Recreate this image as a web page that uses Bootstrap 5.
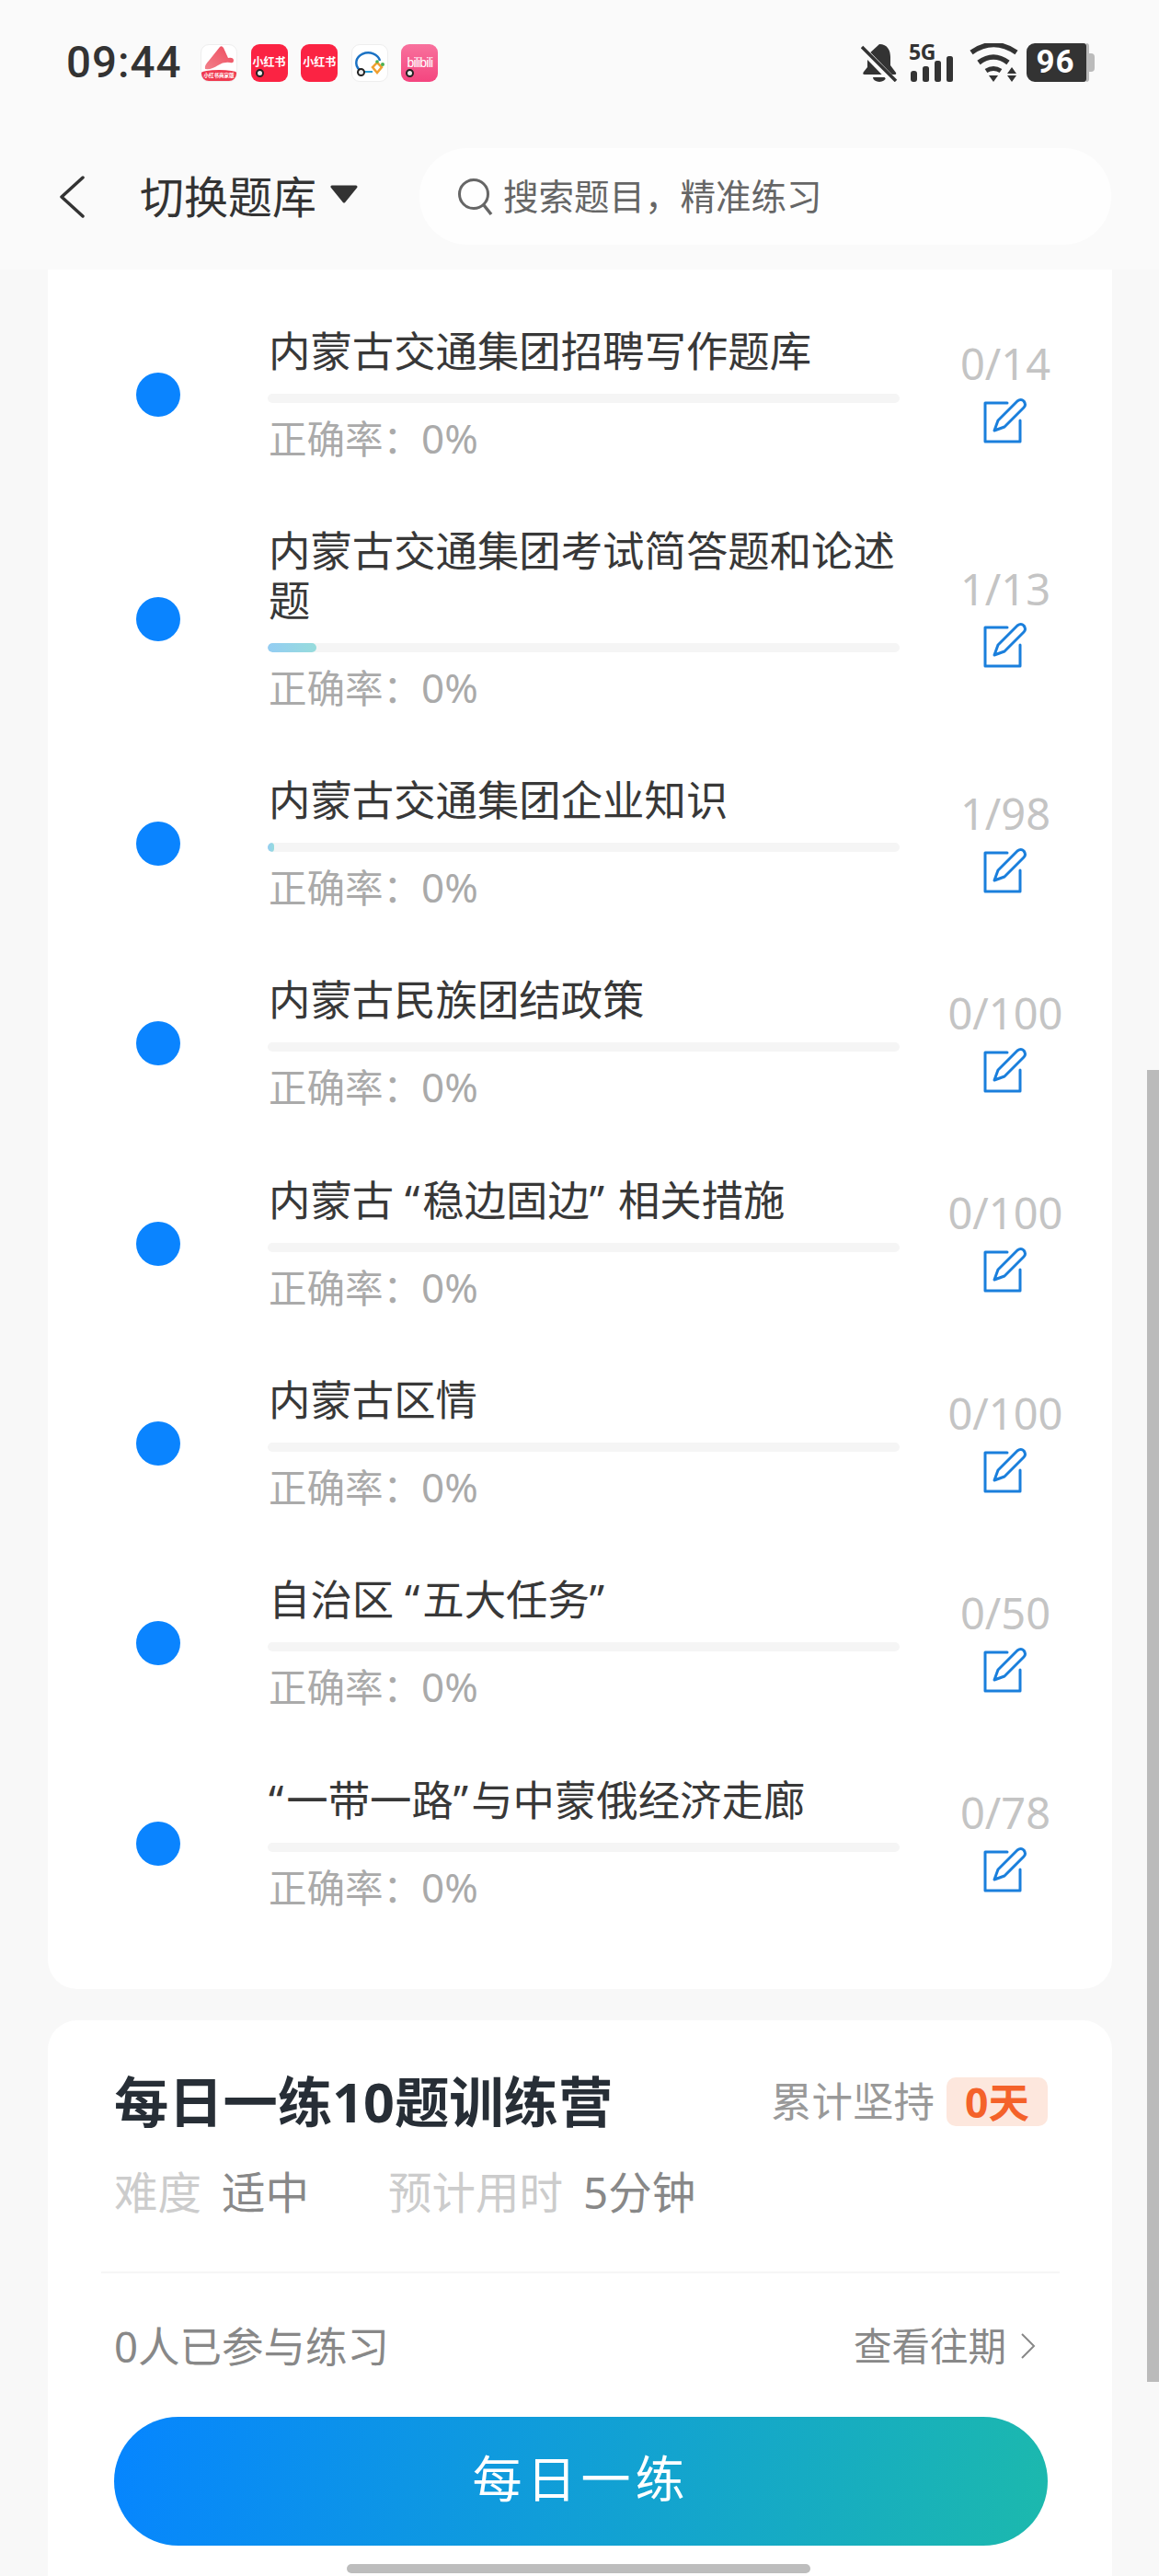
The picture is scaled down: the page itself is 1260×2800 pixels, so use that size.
<!DOCTYPE html>
<html lang="zh-CN">
<head>
    <meta charset="UTF-8">
    <meta name="viewport" content="width=device-width, initial-scale=1.0">
    <title>切换题库</title>
    <link rel="stylesheet" href="https://cdn.jsdelivr.net/npm/bootstrap@5.3.0/dist/css/bootstrap.min.css">
    <style>
        html, body { height: 2800px; overflow: hidden; }
        body { background: #f8f8f8; font-family: "Noto Sans", "Noto Sans CJK SC", sans-serif; color: #333; position: relative; }

        .top-head { height: 293px; background: #fafafa; padding-top: 47px; }
        .status-row { height: 42px; padding: 0 70px 0 72px; }
        .clock { font-family: Roboto, sans-serif; font-weight: 500; font-size: 47.5px; line-height: 42px; color: #333; letter-spacing: 1px; width: 146px; }
        .app-ico { width: 40px; height: 41px; border-radius: 9px; margin-right: 14.6px; position: relative; overflow: hidden; font-weight: 700; color: #fff; text-align: center; }
        .app-red { background: #fb2343; font-size: 12px; line-height: 38px; font-family: "Noto Sans CJK SC", sans-serif; white-space: nowrap; }
        .app-pink { background: linear-gradient(#f8719d, #f4457f); font-size: 14px; line-height: 40px; font-family: "Liberation Sans Narrow", "Liberation Sans", sans-serif; font-weight: 400; letter-spacing: -.8px; white-space: nowrap; }
        .app-white { background: #fff; border: 1px solid #eee; }
        .app-band { position: absolute; left: 0; right: 0; bottom: 0; height: 12px; background: #ef3a50; border-radius: 50% 50% 0 0 / 3px 3px 0 0; font-size: 5.500px; line-height: 12px; color: #fff; font-family: "Noto Sans CJK SC", sans-serif; white-space: nowrap; }
        .app-ring { position: absolute; left: 5px; bottom: 5px; width: 9px; height: 9px; border-radius: 50%; background: #eee; border: 2.5px solid #222; }
        .signal-box { width: 50px; height: 42px; position: relative; margin-left: 12px; }
        .signal-tag { position: absolute; left: 0; top: 0; font-family: "Open Sans", Roboto, sans-serif; font-weight: 700; font-size: 23px; line-height: 19px; color: #333; letter-spacing: -.5px; }
        .battery { width: 65px; height: 42px; background: #333; border-radius: 9px 3px 3px 9px; color: #fff; font-family: Roboto, sans-serif; font-weight: 700; font-size: 35px; line-height: 42px; text-align: center; letter-spacing: 1px; padding-right: 2px; }
        .battery-end { width: 3px; height: 42px; background: #bbb; border-radius: 0 6px 6px 0; }
        .battery-nub { width: 6px; height: 20px; background: #bbb; border-radius: 0 4px 4px 0; }

        .nav-row { height: 105px; margin-top: 72px; padding-left: 64px; padding-right: 52px; }
        .bank-title { font-size: 48px; line-height: 54px; margin-left: 60px; color: #333; }
        .drop-tri { margin-left: 14px; margin-bottom: 5px; }
        .search-pill { width: 752px; height: 105px; background: #fefefe; border-radius: 52px; padding-left: 41px; margin-left: auto; font-size: 38.500px; color: #666; }
        .search-pill span { margin-left: 10px; }

        .list-panel { margin: 0 51px 0 52px; height: 1869px; background: #fff; border: 0; border-radius: 0 0 32px 32px; padding-top: 27px; }
        .q-row { padding: 33.65px 0; }
        .dot-col { width: 239px; }
        .blue-dot { width: 48px; height: 48px; border-radius: 50%; background: #0a84ff; }
        .q-main { width: 687px; }
        .q-title { font-size: 45.4px; line-height: 54px; color: #383838; padding-left: 1px; }
        .q-mark { letter-spacing: 3px; }
        .q-track { height: 10px; margin: 20px 0 12px; background: #f5f5f5; border-radius: 5px; }
        .q-fill { background: linear-gradient(90deg, #94cdf3, #97dcdc); border-radius: 5px; }
        .q-rate { font-size: 41.500px; line-height: 54px; color: #aaa; padding-left: 1px; }
        .q-pct { font-size: 44px; line-height: 0; }
        .q-side { width: 230px; padding-bottom: 6.8px; }
        .q-count { font-size: 47px; line-height: 54px; color: #c4c4c4; margin-bottom: 9.8px; }
        .edit-ico { width: 50px; height: 50px; display: block; }

        .camp-panel { margin: 34px 51px 0 52px; height: 700px; background: #fff; border: 0; border-radius: 32px; padding: 58px 70px 0 72px; }
        .camp-title { font-size: 59.3px; line-height: 60px; font-weight: 700; color: #272e36; }
        .streak { font-size: 44.500px; line-height: 54px; color: #999; }
        .streak-tag { width: 110px; height: 53px; margin-left: 13px; background: #fde7dd; color: #f4622a; font-weight: 700; border-radius: 10px; line-height: 53px; text-align: center; }
        .meta-row { font-size: 47.500px; line-height: 60px; margin-top: 39px; }
        .meta-key { color: #ccc; }
        .meta-val { color: #888; margin-left: 22px; }
        .camp-rule { height: 2px; background: #f6f6f6; margin: 56px -13px 0 -14px; }
        .joined-row { margin-top: 52px; height: 54px; }
        .joined { font-size: 45.500px; line-height: 54px; color: #888; }
        .history { font-size: 41.500px; line-height: 54px; color: #888; }
        .history svg { margin: 0 13px 0 15px; }
        .start-btn { display: block; width: 100%; height: 140px; margin-top: 49.5px; border: 0; border-radius: 70px; background: linear-gradient(100deg, #0685ff, #1cb9ad); color: #fff; font-size: 54px; line-height: 74px; letter-spacing: 5px; padding-bottom: 12px; }

        .scroll-thumb { position: absolute; left: 1247px; top: 1163px; width: 13px; height: 1426px; background: #bbb; }
        .home-bar { position: absolute; left: 377px; top: 2787px; width: 504px; height: 10px; background: #bdbdbd; border-radius: 5px; }
    </style>
</head>
<body>
    <header class="top-head">
        <div class="status-row d-flex align-items-center">
            <div class="clock">09:44</div>
            <div class="app-ico app-white">
                <svg width="38" height="30" viewBox="0 0 38 30" class="d-block"><defs><linearGradient id="aGrad" x1="0" y1="1" x2="1" y2="0"><stop offset="0" stop-color="#f2808a"/><stop offset="1" stop-color="#ee4a5c"/></linearGradient></defs><path d="M20 2 Q22 0 24 3 L29 14 Q35 13 35 17 Q35 20 31 19 Q24 18 18 22 Q11 27 4 26 Q3 22 8 17 Z" fill="url(#aGrad)"/></svg>
                <div class="app-band">小红书商家版</div>
            </div>
            <div class="app-ico app-red">小红书<span class="app-ring"></span></div>
            <div class="app-ico app-red">小红书</div>
            <div class="app-ico app-white">
                <svg width="38" height="39" viewBox="0 0 38 39"><path d="M30 17 A13 11 0 1 0 8 27" fill="none" stroke="#1b72c4" stroke-width="2.500"/><path d="M10 29 H22" stroke="#2aa0d8" stroke-width="2"/><path d="M27 19 l5 5 -5 6 -5 -6 Z" fill="none" stroke="#f0a030" stroke-width="2.500"/><circle cx="33" cy="21" r="2" fill="#4bb050"/><circle cx="27" cy="18" r="1.800" fill="#4bb050"/></svg>
                <span class="app-ring"></span>
            </div>
            <div class="app-ico app-pink">bilibili<span class="app-ring"></span></div>

            <div class="ms-auto d-flex align-items-center">
                <svg width="40" height="42" viewBox="0 0 40 42"><path d="M20 1 C29 1 32 8 32 15 V24 L38 32 Q39 34 36 34 H4 Q1 34 3 31 L7 26 V13 Z" fill="#333"/><path d="M13 37 H27 A7 5 0 0 1 13 37 Z" fill="#333"/><path d="M0 5 L36 42" stroke="#fafafa" stroke-width="8"/><path d="M1 4 L38 41" stroke="#333" stroke-width="3.500"/></svg>
                <div class="signal-box">
                    <span class="signal-tag">5G</span>
                    <svg width="50" height="42" viewBox="0 0 50 42" class="d-block">
                        <rect x="2" y="30" width="7" height="12" rx="3" fill="#333"/><rect x="15" y="25" width="7" height="17" rx="2.500" fill="#333"/><rect x="28" y="19" width="7" height="23" rx="2.500" fill="#333"/><rect x="41" y="14" width="7" height="28" rx="2.500" fill="#333"/>
                    </svg>
                </div>
                <svg width="54" height="42" viewBox="0 0 54 42" class="ms-3 me-2"><path d="M2 10 Q26 -7 51 10" fill="none" stroke="#333" stroke-width="5.500"/><path d="M10 21 Q26 9 42 21" fill="none" stroke="#333" stroke-width="5.500"/><path d="M18 30 Q26 25 34 30" fill="none" stroke="#333" stroke-width="5"/><path d="M21 35 H31 L26 42 Z" fill="#333"/><path d="M46 26 L51 33 H41 Z M41 35 H51 L46 42 Z" fill="#333"/></svg>
                <div class="battery">96</div>
                <div class="battery-end"></div>
                <div class="battery-nub"></div>
            </div>
        </div>
        <div class="nav-row d-flex align-items-center">
            <svg width="28" height="46" viewBox="0 0 28 46"><path d="M26 2 L3 23 L26 44" fill="none" stroke="#333" stroke-width="3.500" stroke-linecap="round" stroke-linejoin="round"/></svg>
            <div class="bank-title">切换题库</div>
            <svg width="32" height="20" viewBox="0 0 32 20" class="drop-tri"><path d="M3 2 H29 L16 18 Z" fill="#333" stroke="#333" stroke-width="3" stroke-linejoin="round"/></svg>
            <div class="search-pill d-flex align-items-center">
                <svg width="40" height="42" viewBox="0 0 40 42"><circle cx="18" cy="18" r="15.500" fill="none" stroke="#666" stroke-width="3"/><path d="M29 30 L37 40" stroke="#666" stroke-width="3.500"/></svg>
                <span>搜索题目，精准练习</span>
            </div>
        </div>
    </header>

    <main>
        <div class="card list-panel" id="questionList"></div>

        <div class="card camp-panel">
            <div class="d-flex align-items-center justify-content-between">
                <div class="camp-title">每日一练10题训练营</div>
                <div class="streak d-flex align-items-center">累计坚持<span class="streak-tag">0天</span></div>
            </div>
            <div class="meta-row d-flex">
                <div style="width:298px"><span class="meta-key">难度</span><span class="meta-val">适中</span></div>
                <div><span class="meta-key">预计用时</span><span class="meta-val">5分钟</span></div>
            </div>
            <div class="camp-rule"></div>
            <div class="joined-row d-flex align-items-center justify-content-between">
                <div class="joined">0人已参与练习</div>
                <div class="history d-flex align-items-center">查看往期<svg width="17" height="30" viewBox="0 0 17 30"><path d="M2 2 L15 15 L2 28" fill="none" stroke="#888" stroke-width="2"/></svg></div>
            </div>
            <button class="btn start-btn">每日一练</button>
        </div>
    </main>

    <div class="scroll-thumb"></div>
    <div class="home-bar"></div>

    <script>
        const questions = [
            { title: "内蒙古交通集团招聘写作题库", done: 0, total: 14 },
            { title: "内蒙古交通集团考试简答题和论述题", done: 1, total: 13 },
            { title: "内蒙古交通集团企业知识", done: 1, total: 98 },
            { title: "内蒙古民族团结政策", done: 0, total: 100 },
            { title: "内蒙古 “稳边固边” 相关措施", done: 0, total: 100 },
            { title: "内蒙古区情", done: 0, total: 100 },
            { title: "自治区 “五大任务”", done: 0, total: 50 },
            { title: "“一带一路”与中蒙俄经济走廊", done: 0, total: 78 }
        ];

        const editIcon = `<svg class="edit-ico" viewBox="0 0 50 50"><path d="M27 6 H3 V48 H41 V25" fill="none" stroke="#1a7fdc" stroke-width="3" stroke-linejoin="round" stroke-linecap="round"/><path d="M13 36 L17 25 L38 4 Q42 1 45 4 Q48 8 45 11 L24 32 Z" fill="none" stroke="#1a7fdc" stroke-width="3" stroke-linejoin="round"/></svg>`;

        const list = document.getElementById("questionList");
        questions.forEach((q) => {
            const pct = q.done / q.total * 100;
            const title = q.title.replace(/[“”]/g, (m) => `<span class="q-mark">${m}</span>`);
            const row = document.createElement("div");
            row.className = "q-row d-flex align-items-center";
            row.innerHTML = `
                <div class="dot-col d-flex justify-content-center"><div class="blue-dot"></div></div>
                <div class="q-main">
                    <div class="q-title">${title}</div>
                    <div class="progress q-track"><div class="progress-bar q-fill" style="width:${pct}%"></div></div>
                    <div class="q-rate">正确率：<span class="q-pct">0%</span></div>
                </div>
                <div class="q-side d-flex flex-column align-items-center">
                    <div class="q-count">${q.done}/${q.total}</div>
                    ${editIcon}
                </div>`;
            list.appendChild(row);
        });
    </script>
</body>
</html>
